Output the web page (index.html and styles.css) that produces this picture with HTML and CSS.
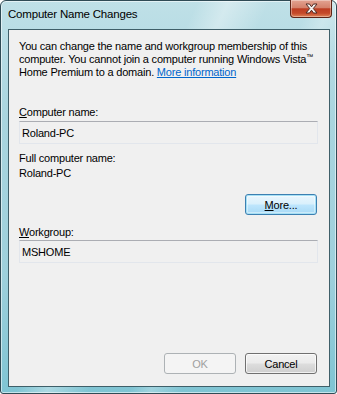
FILE: index.html
```
<!DOCTYPE html>
<html lang="en">
<head>
    <meta charset="UTF-8">
    <title>Computer Name Changes</title>
    <link rel="stylesheet" href="styles.css">
</head>

<body>
    <!--dialog window-->
    <div class="win">
        <!--title bar-->
        <div class="titlebar">
            <span class="ttl">Computer Name Changes</span>
            <button class="closebtn" type="button" aria-label="Close">
                <svg width="15" height="11" viewBox="0 0 15 11">
                    <path d="M2 1 L5.5 1 L7.5 3.8 L9.5 1 L13 1 L9.3 5.5 L13 10 L9.5 10 L7.5 7.2 L5.5 10 L2 10 L5.7 5.5 Z"
                          fill="#f6f3f1" stroke="#4e2b24" stroke-width="1" stroke-linejoin="round"/>
                </svg>
            </button>
        </div>

        <!--client area-->
        <div class="client">
            <p class="intro">
                You can change the name and workgroup membership of this<br>
                computer. You cannot join a computer running Windows Vista<sup>™</sup><br>
                Home Premium to a domain. <a href="#">More information</a>
            </p>

            <label class="lbl first"><u>C</u>omputer name:</label>
            <div class="field">Roland-PC</div>

            <div class="lbl full">Full computer name:</div>
            <div class="lbl">Roland-PC</div>

            <div class="btnrow more">
                <button class="btn dflt" type="button"><u>M</u>ore...</button>
            </div>

            <label class="lbl wg"><u>W</u>orkgroup:</label>
            <div class="field">MSHOME</div>

            <div class="btnrow foot">
                <button class="btn" type="button" disabled>OK</button>
                <button class="btn" type="button">Cancel</button>
            </div>
        </div>
    </div>
</body>
</html>
```

FILE: styles.css
```
html,
body,
p {
    margin: 0;
    padding: 0;
}

body {
    background: #fff;
    font-family: "Liberation Sans", Arial, sans-serif;
    font-size: 11px;
    letter-spacing: -0.2px;
    color: #000;
}

/*window frame*/
.win {
    width: 337px;
    height: 394px;
    box-sizing: border-box;
    border: 1px solid #2f4b55;
    border-radius: 6px 6px 3px 3px;
    display: flex;
    flex-direction: column;
    background:
        linear-gradient(115deg, rgba(255,255,255,0) 38%, rgba(255,255,255,.35) 44%, rgba(255,255,255,0) 52%, rgba(255,255,255,0) 60%, rgba(255,255,255,.25) 64%, rgba(255,255,255,0) 70%),
        linear-gradient(to bottom, #bfe0e7, #a9d5df 30%, #9ed0dc 70%, #7fc4d3);
    box-shadow: inset 0 0 0 1px rgba(255,255,255,.55);
}

/*title bar*/
.titlebar {
    height: 28px;
    display: flex;
    align-items: flex-start;
    padding-left: 7px;
}

.ttl {
    line-height: 27px;
    font-size: 11.5px;
    color: #000;
}

.closebtn {
    margin-left: auto;
    margin-right: 4px;
    margin-top: -1px;
    width: 42px;
    height: 18px;
    padding: 0;
    border: 1px solid #5e2417;
    border-top: 0;
    border-radius: 0 0 4px 4px;
    background: linear-gradient(to bottom, #e3a392 0%, #d4826c 45%, #bd3d22 52%, #c54a2a 78%, #df8458 100%);
    box-shadow: inset 0 0 0 1px rgba(255,255,255,.35);
    display: flex;
    align-items: center;
    justify-content: center;
}

/*client area*/
.client {
    flex: 1;
    margin: 0 6px 6px 7px;
    border: 1px solid #3f5f69;
    background: #f0f0f0;
    padding: 10px 10px 12px 10px;
    display: flex;
    flex-direction: column;
}

.intro {
    line-height: 13px;
    white-space: nowrap;
}

.intro sup {
    font-size: 7px;
    line-height: 0;
    vertical-align: 4px;
    letter-spacing: 0;
}

.intro a {
    color: #0066cc;
}

.lbl {
    display: block;
    line-height: 14px;
}

.lbl.first {
    margin-top: 26px;
    margin-bottom: 2px;
}

.lbl.full {
    margin-top: 7px;
    margin-bottom: 1px;
}

.lbl.wg {
    margin-top: 10px;
    margin-bottom: 1px;
}

/*read-only edit box*/
.field {
    height: 23px;
    box-sizing: border-box;
    margin-right: 1px;
    padding-left: 2px;
    border: 1px solid #e2e6ec;
    border-top-color: #abadb3;
    display: flex;
    align-items: center;
}

.btnrow {
    display: flex;
    justify-content: flex-end;
    gap: 9px;
    padding-right: 2px;
}

.btnrow.more {
    margin-top: 14px;
}

.btnrow.foot {
    margin-top: auto;
}

/*push buttons*/
.btn {
    width: 72px;
    height: 21px;
    padding: 0;
    font-family: inherit;
    font-size: 11px;
    letter-spacing: -0.2px;
    color: #000;
    border: 1px solid #707070;
    border-radius: 3px;
    background: linear-gradient(to bottom, #f2f2f2 0%, #ebebeb 48%, #dddddd 52%, #cfcfcf 100%);
    box-shadow: inset 0 0 0 1px rgba(255,255,255,.7);
}

.btn.dflt {
    border-color: #3c7fb1;
    box-shadow: inset 0 0 0 1px #a6e0f5, inset 0 0 0 2px rgba(255,255,255,.4);
    background: linear-gradient(to bottom, #eaf6fd 0%, #d9f0fc 48%, #bee6fd 52%, #a7d9f5 100%);
}

.btn:disabled {
    color: #a0a0a0;
    border-color: #adb2b5;
    background: #f4f4f4;
    box-shadow: none;
}
```
